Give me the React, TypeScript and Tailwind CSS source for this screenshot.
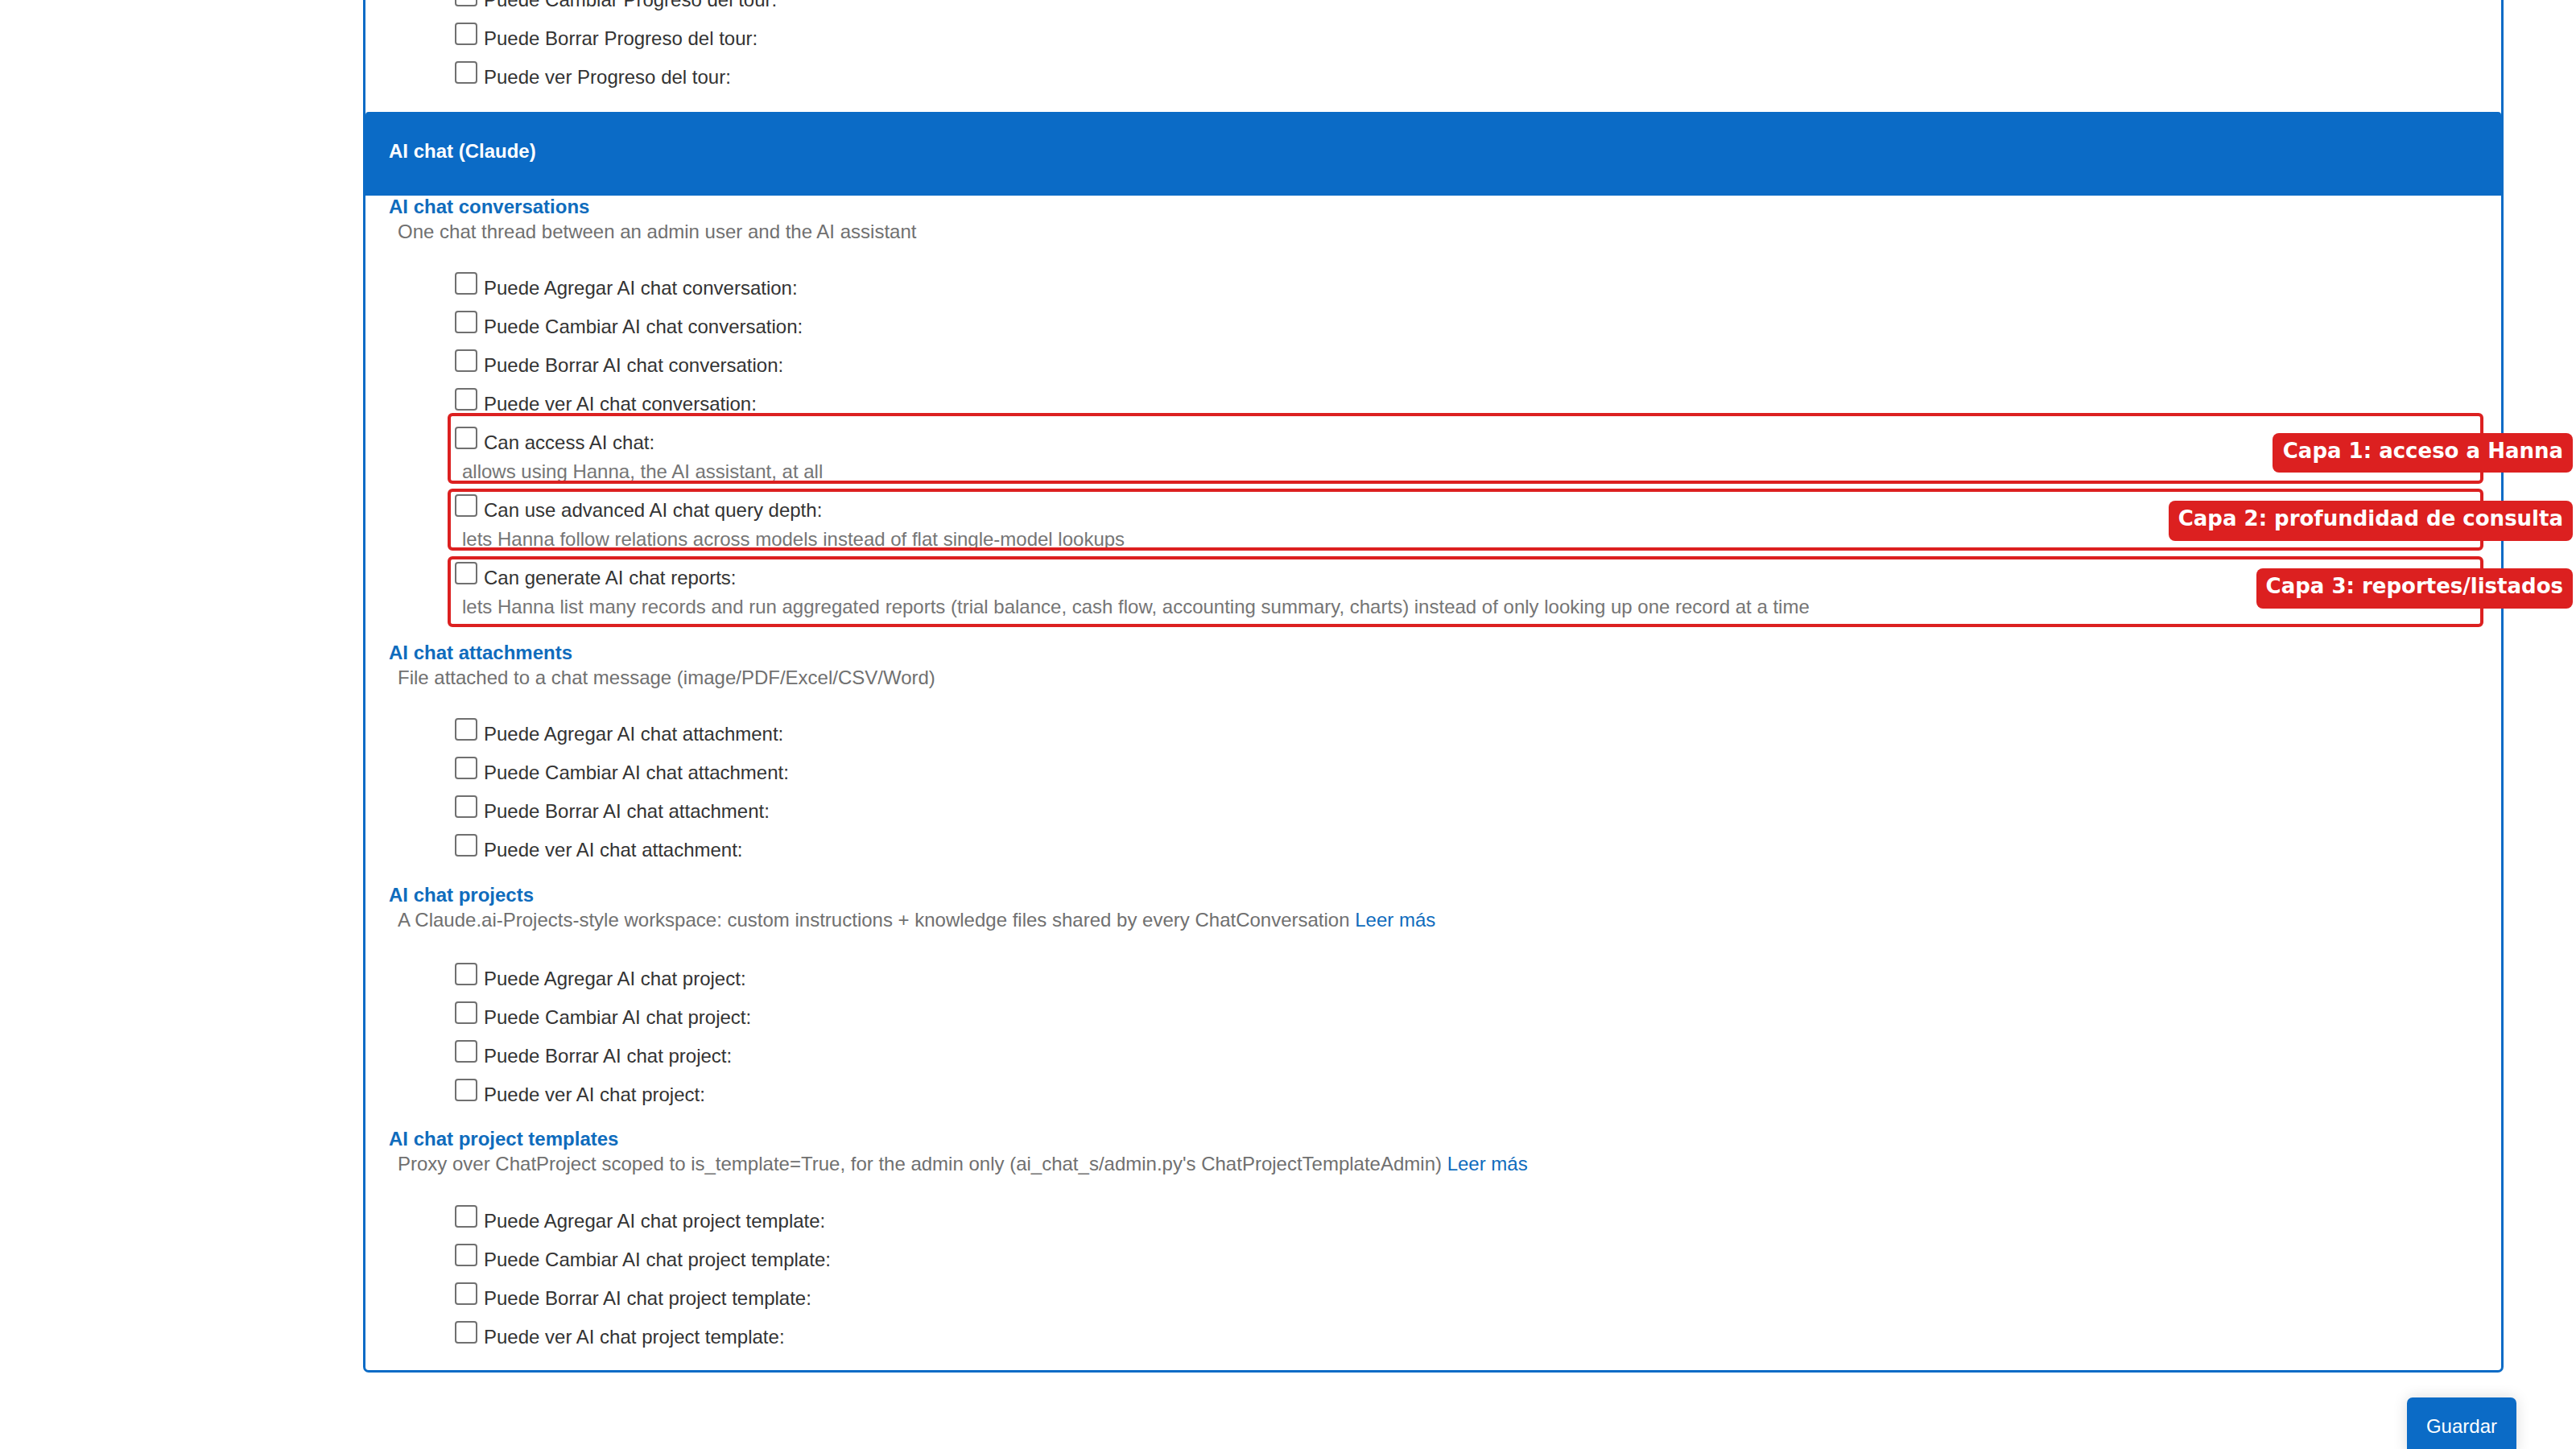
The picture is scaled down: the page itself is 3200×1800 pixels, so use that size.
import React from 'react';

type Perm = {
  label: string;
  help?: string;
};

type Section = {
  title: string;
  description: string;
  more?: boolean;
  perms: Perm[];
  top: string;
  rowsGap: string;
};

const crud = (name: string): Perm[] => [
  { label: `Puede Agregar ${name}:` },
  { label: `Puede Cambiar ${name}:` },
  { label: `Puede Borrar ${name}:` },
  { label: `Puede ver ${name}:` },
];

const sections: Section[] = [
  {
    title: 'AI chat attachments',
    description: 'File attached to a chat message (image/PDF/Excel/CSV/Word)',
    perms: crud('AI chat attachment'),
    top: 'pt-[21px]',
    rowsGap: 'mt-[34px]',
  },
  {
    title: 'AI chat projects',
    description:
      'A Claude.ai-Projects-style workspace: custom instructions + knowledge files shared by every ChatConversation',
    more: true,
    perms: crud('AI chat project'),
    top: 'pt-[20px]',
    rowsGap: 'mt-[37px]',
  },
  {
    title: 'AI chat project templates',
    description:
      "Proxy over ChatProject scoped to is_template=True, for the admin only (ai_chat_s/admin.py's ChatProjectTemplateAdmin)",
    more: true,
    perms: crud('AI chat project template'),
    top: 'pt-[19px]',
    rowsGap: 'mt-[35px]',
  },
];

const layers: Perm[] = [
  { label: 'Can access AI chat:', help: 'allows using Hanna, the AI assistant, at all' },
  {
    label: 'Can use advanced AI chat query depth:',
    help: 'lets Hanna follow relations across models instead of flat single-model lookups',
  },
  {
    label: 'Can generate AI chat reports:',
    help: 'lets Hanna list many records and run aggregated reports (trial balance, cash flow, accounting summary, charts) instead of only looking up one record at a time',
  },
];

function PermRow({ label, help }: Perm) {
  return (
    <div className="pl-[82px]">
      <label className="flex items-start h-[48px] pt-[4px]">
        <input
          type="checkbox"
          className="appearance-none shrink-0 w-[28px] h-[28px] bg-white border-2 border-[#707070] rounded-[4px]"
        />
        <span className="ml-[8px] mt-[8px] leading-[24px] text-[#333] whitespace-nowrap">
          {label}
        </span>
      </label>
      {help && (
        <div className="pl-[9px] pb-[12px] leading-[24px] text-[#757575] whitespace-nowrap">
          {help}
        </div>
      )}
    </div>
  );
}

function SectionHead({
  title,
  description,
  more,
}: {
  title: string;
  description: string;
  more?: boolean;
}) {
  return (
    <>
      <h3 className="font-bold leading-[24px] text-[#0f6cbd]">{title}</h3>
      <p className="mt-[7px] pl-[11px] leading-[24px] text-[#707070] whitespace-nowrap">
        {description}
        {more && (
          <>
            {' '}
            <a href="#" className="text-[#0f6cbd]">
              Leer más
            </a>
          </>
        )}
      </p>
    </>
  );
}

export default function App() {
  return (
    <div className="min-h-screen bg-white text-[24px] font-['Liberation_Sans',Arial,sans-serif] overflow-hidden">
      <div className="flex flex-col pl-[451px] pr-[74px]">
        <div className="-mt-[27px] mr-[16px] border-[3px] border-[#0b6bc6] rounded-b-[7px] pb-[17px]">
          {/* tail of the previous module */}
          <div className="px-[29px] mb-[19px]">
            <PermRow label="Puede Cambiar Progreso del tour:" />
            <PermRow label="Puede Borrar Progreso del tour:" />
            <PermRow label="Puede ver Progreso del tour:" />
          </div>

          <h2 className="bg-[#0b6bc6] rounded-t-[4px] pl-[29px] pt-[37px] pb-[43px] leading-[24px] font-bold text-white">
            AI chat (Claude)
          </h2>

          <div className="px-[29px] pt-[2px]">
            <SectionHead
              title="AI chat conversations"
              description="One chat thread between an admin user and the AI assistant"
            />
            <div className="mt-[34px]">
              {crud('AI chat conversation').map((p) => (
                <PermRow key={p.label} label={p.label} />
              ))}
              <div className="relative">
                {layers.map((p) => (
                  <PermRow key={p.label} label={p.label} help={p.help} />
                ))}
                {/* annotation boxes */}
                <div className="absolute left-[73px] -right-[7px] top-[-13px] h-[88px] border-4 border-[#dc2020] rounded-[6px]" />
                <div className="absolute left-[73px] -right-[7px] top-[81px] h-[77px] border-4 border-[#dc2020] rounded-[6px]" />
                <div className="absolute left-[73px] -right-[7px] top-[165px] h-[88px] border-4 border-[#dc2020] rounded-[6px]" />
                <div className="absolute -right-[118px] top-[12px] bg-[#dc2020] text-white font-bold text-[26px] leading-[30px] pl-[13px] pr-[12px] pt-[7px] pb-[12px] rounded-[8px] whitespace-nowrap font-['DejaVu_Sans',sans-serif]">
                  Capa 1: acceso a Hanna
                </div>
                <div className="absolute -right-[118px] top-[96px] bg-[#dc2020] text-white font-bold text-[26px] leading-[30px] pl-[12px] pr-[12px] pt-[7px] pb-[13px] rounded-[8px] whitespace-nowrap font-['DejaVu_Sans',sans-serif]">
                  Capa 2: profundidad de consulta
                </div>
                <div className="absolute -right-[118px] top-[180px] bg-[#dc2020] text-white font-bold text-[26px] leading-[30px] pl-[12px] pr-[12px] pt-[7px] pb-[13px] rounded-[8px] whitespace-nowrap font-['DejaVu_Sans',sans-serif]">
                  Capa 3: reportes/listados
                </div>
              </div>
            </div>

            {sections.map((s) => (
              <div key={s.title} className={s.top}>
                <SectionHead title={s.title} description={s.description} more={s.more} />
                <div className={s.rowsGap}>
                  {s.perms.map((p) => (
                    <PermRow key={p.label} label={p.label} />
                  ))}
                </div>
              </div>
            ))}
          </div>
        </div>

        <button
          type="button"
          className="self-end mt-[31px] bg-[#0b6bc6] text-white leading-[24px] px-[24px] py-[24px] rounded-[7px] shadow-[0_0_18px_rgba(0,0,0,0.14)]"
        >
          Guardar
        </button>
      </div>
    </div>
  );
}
